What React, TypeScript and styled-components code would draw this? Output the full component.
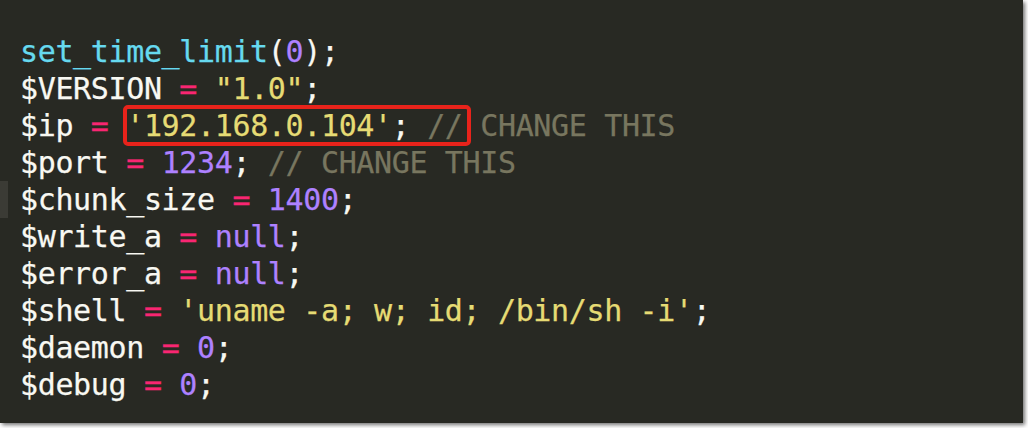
import React from "react";
import styled, { createGlobalStyle } from "styled-components";

const Global = createGlobalStyle`
  html, body { margin: 0; padding: 0; background: #ffffff; }
  #root { width: 1028px; height: 428px; }
`;

const Editor = styled.div`
  width: 1023px;
  height: 423px;
  box-sizing: border-box;
  background: #282923;
  box-shadow: 2px 2px 4px rgba(0, 0, 0, 0.55);
  padding-top: 33px;
  font-family: "DejaVu Sans Mono", "Liberation Mono", monospace;
  font-size: 30px;
  letter-spacing: -0.36px;
  line-height: 37px;
  color: #f8f8f2;
  -webkit-text-stroke: 0.25px currentColor;
  display: flex;
  flex-direction: column;
`;

const Line = styled.div<{ $active?: boolean }>`
  height: 37px;
  padding-left: 20px;
  white-space: pre;
  box-shadow: ${(p) => (p.$active ? "inset 8px 0 0 #3b3b35" : "none")};
`;

const Fn = styled.span`color: #66d9ef;`;
const Num = styled.span`color: #ae81ff;`;
const Op = styled.span`color: #f92672;`;
const Str = styled.span`color: #e6db74;`;
const Comment = styled.span`color: #78765f;`;

const Highlight = styled.span`
  position: relative;
  display: inline-block;
  &::after {
    content: "";
    position: absolute;
    left: -3px;
    right: -8px;
    top: -2px;
    bottom: -2px;
    border: 4px solid #e8231b;
    border-radius: 5px;
    pointer-events: none;
  }
`;

export default function App() {
  return (
    <>
      <Global />
      <Editor>
        <Line>
          <Fn>set_time_limit</Fn>(<Num>0</Num>);
        </Line>
        <Line>
          $VERSION <Op>=</Op> <Str>"1.0"</Str>;
        </Line>
        <Line>
          $ip <Op>=</Op>{" "}
          <Highlight>
            <Str>'192.168.0.104'</Str>; <Comment>//</Comment>
          </Highlight>
          <Comment> CHANGE THIS</Comment>
        </Line>
        <Line>
          $port <Op>=</Op> <Num>1234</Num>; <Comment>// CHANGE THIS</Comment>
        </Line>
        <Line $active>
          $chunk_size <Op>=</Op> <Num>1400</Num>;
        </Line>
        <Line>
          $write_a <Op>=</Op> <Num>null</Num>;
        </Line>
        <Line>
          $error_a <Op>=</Op> <Num>null</Num>;
        </Line>
        <Line>
          $shell <Op>=</Op> <Str>'uname -a; w; id; /bin/sh -i'</Str>;
        </Line>
        <Line>
          $daemon <Op>=</Op> <Num>0</Num>;
        </Line>
        <Line>
          $debug <Op>=</Op> <Num>0</Num>;
        </Line>
      </Editor>
    </>
  );
}
